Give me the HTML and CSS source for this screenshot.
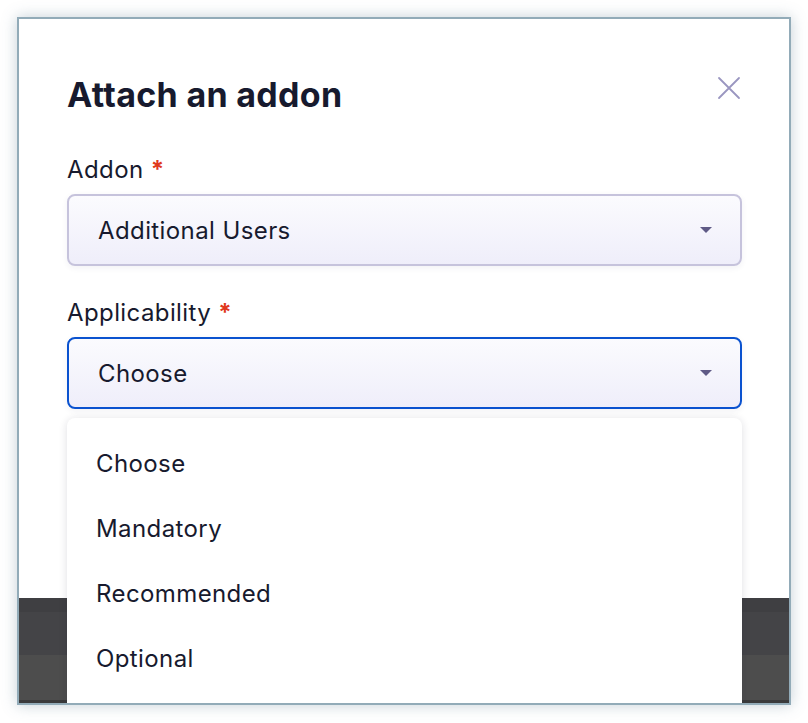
FILE: index.html
```html
<!DOCTYPE html>
<html lang="en">
<head>
	<meta charset="UTF-8">
	<title>Attach an addon</title>
	<link rel="stylesheet" href="styles.css">
</head>
<body>
	<div class="frame">
		<div class="modal">
			<h1 class="modal-title">Attach an addon</h1>
			<a href="javascript:;" class="modal-close" aria-label="Close">
				<svg width="24" height="24" viewBox="0 0 24 24"><path d="M2 2 L22 22 M22 2 L2 22" stroke="#9a96c0" stroke-width="1.8" stroke-linecap="round" fill="none"/></svg>
			</a>

			<div class="field">
				<label class="field-label">Addon <span class="req">*</span></label>
				<div class="select">
					<span class="select-value">Additional Users</span>
					<span class="caret"></span>
				</div>
			</div>

			<div class="field">
				<label class="field-label">Applicability <span class="req">*</span></label>
				<div class="select focus">
					<span class="select-value">Choose</span>
					<span class="caret"></span>
				</div>
				<ul class="menu">
					<li>Choose</li>
					<li>Mandatory</li>
					<li>Recommended</li>
					<li>Optional</li>
				</ul>
			</div>
		</div>
		<div class="backdrop">
			<div class="band b1"></div>
			<div class="band b2"></div>
			<div class="band b3"></div>
			<div class="band b4"></div>
		</div>
	</div>
</body>
</html>
```

FILE: styles.css
```css
* {
	box-sizing: border-box;
}
body {
	margin: 0;
	padding: 17px;
	background: #fff;
	font-family: Inter, "Noto Sans", sans-serif;
	color: #171a2e;
}
.frame {
	position: relative;
	width: 774px;
	height: 688px;
	border: 2px solid #92abb8;
	box-shadow: 0 0 14px rgba(90, 120, 140, .35);
	overflow: hidden;
	display: flex;
	flex-direction: column;
	background: #fff;
}
.modal {
	position: relative;
	flex: 1;
	padding: 56px 47px 0 48px;
}
.modal-title {
	margin: 0;
	font-size: 34px;
	line-height: 40px;
	font-weight: 700;
	letter-spacing: 0.3px;
}
.modal-close {
	position: absolute;
	top: 57px;
	right: 48px;
	display: block;
	width: 24px;
	height: 24px;
}
.modal-close svg {
	display: block;
}
.field {
	position: relative;
	margin-top: 40px;
}
.field + .field {
	margin-top: 32px;
}
.field-label {
	display: block;
	font-size: 24px;
	line-height: 30px;
	letter-spacing: 0.4px;
	margin-bottom: 9px;
}
.req {
	color: #e0381c;
	font-weight: 700;
}
.select {
	display: flex;
	align-items: center;
	justify-content: space-between;
	height: 72px;
	padding: 0 28px 0 29px;
	border: 2px solid #c6c3dc;
	border-radius: 8px;
	background: linear-gradient(to bottom, #fbfbfe, #efeefa);
	box-shadow: 0 2px 6px rgba(40, 40, 80, .06);
}
.select.focus {
	border-color: #0a52cf;
}
.select-value {
	font-size: 24px;
	letter-spacing: 0.4px;
}
.caret {
	width: 0;
	height: 0;
	border-left: 6px solid transparent;
	border-right: 6px solid transparent;
	border-top: 6px solid #5f5a86;
}
.menu {
	position: absolute;
	top: calc(100% + 9px);
	left: 0;
	right: 0;
	margin: 0;
	padding: 13px 0 40px;
	list-style: none;
	background: #fff;
	border-radius: 8px;
	box-shadow: 0 1px 8px rgba(30, 30, 60, .14);
	z-index: 2;
}
.menu li {
	height: 65px;
	line-height: 65px;
	padding-left: 29px;
	font-size: 24px;
	letter-spacing: 0.4px;
}
.backdrop {
	height: 105px;
	display: flex;
	flex-direction: column;
}
.band.b1 {
	height: 14px;
	background: #3f3f42;
}
.band.b2 {
	height: 43px;
	background: #444447;
}
.band.b3 {
	height: 45px;
	background: #4d4d4d;
}
.band.b4 {
	height: 3px;
	background: #3a3a3b;
}
```
